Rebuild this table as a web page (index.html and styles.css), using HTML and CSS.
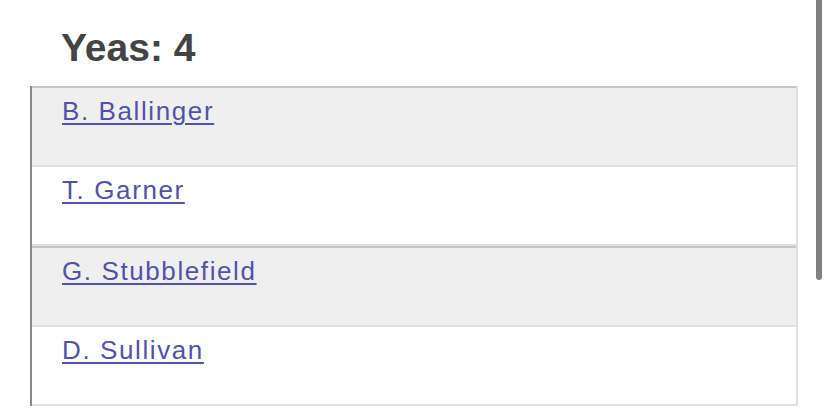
FILE: index.html
```html
<!DOCTYPE html>
<html>
<head>
<meta charset="utf-8">
<link rel="stylesheet" href="styles.css">
</head>
<body>
<div class="page">
  <h1 class="title">Yeas: 4</h1>
  <div class="list">
    <div class="group">
      <div class="row shaded"><a href="#">B. Ballinger</a></div>
      <div class="row"><a href="#">T. Garner</a></div>
    </div>
    <div class="group">
      <div class="row shaded"><a href="#">G. Stubblefield</a></div>
      <div class="row"><a href="#">D. Sullivan</a></div>
    </div>
  </div>
</div>
<div class="scrollbar"></div>
</body>
</html>
```

FILE: styles.css
```css
html, body {
  margin: 0;
  padding: 0;
  background: #ffffff;
}
body {
  font-family: "Liberation Sans", Arial, sans-serif;
  width: 828px;
  height: 417px;
  overflow: hidden;
  position: relative;
}
.page {
  padding: 0 30px;
  width: 768px;
}
.title {
  margin: 0;
  padding: 25px 0 0 31px;
  height: 86px;
  box-sizing: border-box;
  font-size: 39px;
  font-weight: bold;
  color: #444444;
  line-height: 45px;
}
.list {
  border-left: 2px solid #888888;
  border-right: 2px solid #e0e0e0;
}
.group {
  border-top: 2px solid #c6c6c6;
}
.row {
  border-bottom: 2px solid #e0e0e0;
  padding: 8px 0 0 30px;
  height: 69px;
  font-size: 26px;
  line-height: 30px;
  letter-spacing: 1.6px;
  background: #ffffff;
}
.row.shaded {
  background: #efefef;
}
.row a {
  color: #5252a8;
  text-decoration: underline;
  text-decoration-thickness: 2px;
  text-underline-offset: 3px;
}
.scrollbar {
  position: absolute;
  left: 816px;
  top: 0;
  width: 6px;
  height: 280px;
  background: #808080;
  border-radius: 0 0 3px 3px;
}
```
